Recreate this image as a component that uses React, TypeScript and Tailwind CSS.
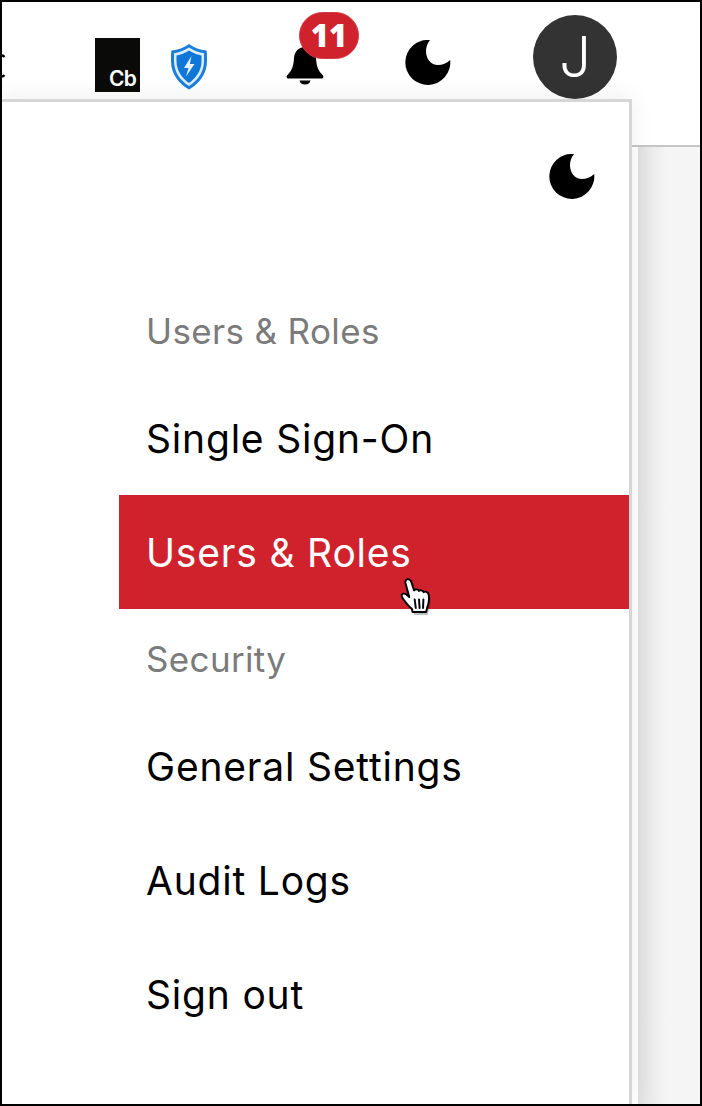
const moon = "M25 0A22.5 22.5 0 1 0 45.2 20C41.5 23.5 37.5 25 33 25C26 25 21 19 21 11C21 7 22.5 3 25 0Z";
const handPath = "M6.5 26C4.5 23 1.5 20 1.5 17.5C1.5 15.5 4 15 6 16.5L8.5 19L5 5C4.5 2.5 6 1 7.5 1.2C9 1.4 10 2.5 10.6 4.5L13 12.5C13.5 11 16.5 11 17.3 13C18 11.8 21 12 21.8 14.2C22.8 13.2 25.8 13.8 26.3 16.5C27 20 26.5 25 25 29.5L24 34H11.5L11 31C9.5 29.5 8 28 6.5 26Z";

function Moon() {
  return (
    <svg width="46" height="46" viewBox="0 0 46 46" className="block">
      <path d={moon} fill="#000" />
    </svg>
  );
}

function Bell() {
  return (
    <svg width="38" height="38" viewBox="0 0 38 38" className="block">
      <path
        d="M19 0C12 0 8.5 5 8 11C7.5 18 6.5 23 1.5 28C0 29.5 .5 31.5 2.5 31.5H35.5C37.5 31.5 38 29.5 36.5 28C31.5 23 30.5 18 30 11C29.5 5 26 0 19 0Z"
        fill="#000"
      />
      <path d="M13.5 33.5H24.5C24 36 22 37.5 19 37.5C16 37.5 14 36 13.5 33.5Z" fill="#000" />
    </svg>
  );
}

function Shield() {
  return (
    <svg width="36" height="46" viewBox="0 0 36 46" className="block">
      <path
        d="M18 0C13 3.5 7 6 .5 6.5C0 8 0 12 0 17C0 30 8 40 18 45.5C28 40 36 30 36 17C36 12 36 8 35.5 6.5C29 6 23 3.5 18 0Z"
        fill="#1a7fdc"
      />
      <path
        d="M18 3.5C13.5 6.5 8 8.5 3 9.2C3 11 3 14 3 17C3 28.5 10 37 18 42C26 37 33 28.5 33 17C33 14 33 11 33 9.2C28 8.5 22.5 6.5 18 3.5Z"
        fill="#dcecfa"
      />
      <path
        d="M18 6.5C14 9 9.5 10.8 5.5 11.5C5.5 13 5.5 15 5.5 17C5.5 27 11.5 34.5 18 39C24.5 34.5 30.5 27 30.5 17C30.5 15 30.5 13 30.5 11.5C26.5 10.8 22 9 18 6.5Z"
        fill="#0f77d8"
      />
      <path d="M20.5 12L13 24H17.5L15 32.5L23.5 20H18.8L20.5 12Z" fill="#e8f3fc" />
    </svg>
  );
}

function Hand() {
  return (
    <svg width="37" height="42" viewBox="0 0 34 42" preserveAspectRatio="none" className="block overflow-visible">
      <path d={handPath} fill="#000" opacity="0.25" transform="translate(1.5 3)" />
      <path d={handPath} fill="#fff" stroke="#000" strokeWidth="1.8" strokeLinejoin="round" />
      <path d="M13.5 21.5L14.5 30M17.5 21.5L18 30M21.5 21.5L21.2 30" stroke="#000" strokeWidth="1.8" strokeLinecap="round" fill="none" />
    </svg>
  );
}

function Label({ children, cls }: { children: string; cls: string }) {
  return <div className={`pl-[27px] flex items-center text-[#7b7b7b] text-[35px] tracking-[0.35px] ${cls}`}>{children}</div>;
}

function Item({ children, active, nudge }: { children: React.ReactNode; active?: boolean; nudge?: boolean }) {
  return (
    <div
      className={`relative h-[114px] pl-[27px] flex items-center text-[39px] tracking-[0.8px] ${nudge ? "pt-[2px]" : ""} ${
        active ? "bg-[#cf222d] text-white" : "text-black"
      }`}
    >
      {children}
    </div>
  );
}

export default function App() {
  return (
    <div className="relative w-[702px] h-[1106px] border-2 border-black bg-white overflow-hidden font-['Inter',sans-serif] flex flex-col">
      <header className="h-[145px] shrink-0 border-b-2 border-[#c6c6c6] bg-white">
        <div className="h-[97px] flex items-start">
          <div className="ml-[93px] mt-[36px] w-[45px] h-[54px] bg-[#0a0a08] flex items-end justify-end pr-[4px]">
            <span className="text-white text-[21px] leading-[26px] font-semibold tracking-[-0.8px]">Cb</span>
          </div>
          <div className="ml-[31px] mt-[42px]">
            <Shield />
          </div>
          <div className="relative ml-[79px] mt-[45px]">
            <Bell />
            <span className="absolute left-[13px] top-[-35px] w-[60px] h-[47px] rounded-full bg-[#cf222d] border border-[#d53a44] flex items-center justify-center text-white font-['Open_Sans',sans-serif] font-extrabold text-[31px] leading-none">
              11
            </span>
          </div>
          <div className="ml-[81px] mt-[38px]">
            <Moon />
          </div>
          <div className="ml-[82px] mt-[13px] w-[84px] h-[84px] rounded-full bg-[#333333] flex items-center justify-center text-white text-[56px] font-[340] leading-none">
            J
          </div>
        </div>
      </header>
      <main className="flex-1 bg-[linear-gradient(to_right,#ffffff_636px,#e0e0e0_636px,#f5f5f5_664px)]" />
      <svg width="3" height="24" viewBox="0 0 3 24" className="absolute left-0 top-[52px]">
        <path d="M-3 3C-1 1 1 1 2.5 3M-3 21C-1 23 1 23 2.5 21" stroke="#000" strokeWidth="2.5" fill="none" />
      </svg>
      <aside className="absolute left-0 top-[97px] bottom-0 w-[630px] bg-white border-t-[3px] border-r-[3px] border-[#d6d6d6] shadow-[0_-2px_22px_0_rgba(0,0,0,0.07)] pl-[117px]">
        <div className="flex justify-end pt-[52px] pr-[34px]">
          <Moon />
        </div>
        <Label cls="mt-[82px] h-[99px]">Users &amp; Roles</Label>
        <Item nudge>Single Sign-On</Item>
        <Item active nudge>
          Users &amp; Roles
          <span className="absolute left-[281px] top-[83px]">
            <Hand />
          </span>
        </Item>
        <Label cls="h-[101px]">Security</Label>
        <Item>General Settings</Item>
        <Item>Audit Logs</Item>
        <Item>Sign out</Item>
      </aside>
    </div>
  );
}
